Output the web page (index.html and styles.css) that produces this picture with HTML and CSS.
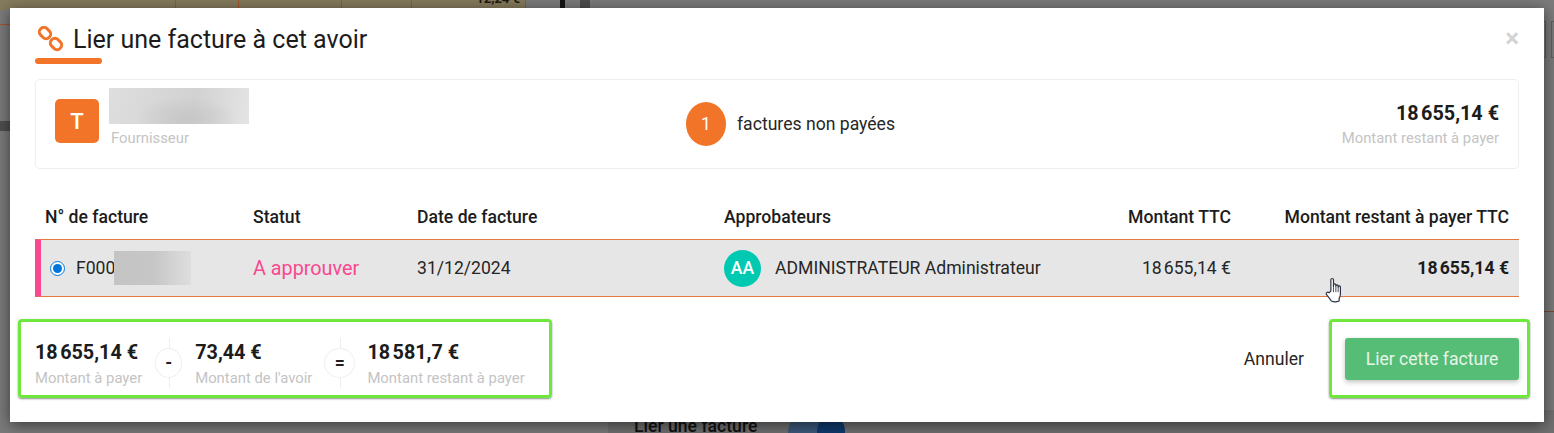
FILE: index.html
```html
<!DOCTYPE html>
<html lang="fr">
<head>
  <meta charset="UTF-8">
  <meta name="viewport" content="width=device-width, initial-scale=1.0">
  <title>Lier une facture à cet avoir</title>
  <link rel="stylesheet" href="styles.css">
</head>
<body>
  <!-- page behind the overlay -->
  <div class="behind" aria-hidden="true">
    <div class="behind-strip">
      <i class="tick tick-1"></i><i class="tick tick-2"></i><i class="tick tick-3"></i><i class="tick tick-4"></i><i class="tick tick-5"></i>
      <span class="behind-amount">12,24 €</span>
    </div>
    <i class="bar-black"></i>
    <i class="bar-grey"></i>
    <i class="left-line"></i>
    <i class="left-band"></i>
    <i class="right-line"></i>
    <i class="right-box right-box-1"></i>
    <i class="right-box right-box-2"></i>
    <div class="behind-pane">
      <span class="behind-title">Lier une facture</span>
      <span class="behind-toggle"><i></i></span>
    </div>
  </div>

  <div class="modal">
    <div class="modal-head">
      <svg class="link-icon" width="26" height="26" viewBox="0 0 26 26" fill="none" stroke="#f27428" stroke-width="3">
        <rect x="1" y="2.5" width="12" height="9" rx="4.2" transform="rotate(45 7 7)"/>
        <rect x="12" y="13.5" width="12" height="9" rx="4.2" transform="rotate(45 18 18)"/>
      </svg>
      <h1 class="modal-title">Lier une facture à cet avoir</h1>
      <span class="close">×</span>
      <i class="title-line"></i>
    </div>

    <div class="supplier-card">
      <div class="supplier">
        <span class="avatar">T</span>
        <div class="supplier-text">
          <div class="blur-name"></div>
          <div class="muted supplier-label">Fournisseur</div>
        </div>
      </div>
      <div class="unpaid">
        <span class="unpaid-count">1</span>
        <span>factures non payées</span>
      </div>
      <div class="remaining">
        <div class="amount">18&#8239;655,14 €</div>
        <div class="muted">Montant restant à payer</div>
      </div>
    </div>

    <div class="grid-row table-head">
      <div>N° de facture</div>
      <div>Statut</div>
      <div>Date de facture</div>
      <div>Approbateurs</div>
      <div class="right">Montant TTC</div>
      <div class="right">Montant restant à payer TTC</div>
    </div>
    <div class="grid-row table-row">
      <div class="invoice-no">
        <input type="radio" name="invoice" checked>
        <span>F000</span>
        <i class="blur-no"></i>
      </div>
      <div class="status">A approuver</div>
      <div>31/12/2024</div>
      <div class="approver">
        <span class="approver-badge">AA</span>
        <span>ADMINISTRATEUR Administrateur</span>
      </div>
      <div class="right">18&#8239;655,14 €</div>
      <div class="right strong">18&#8239;655,14 €</div>
      <svg class="hand" width="20" height="26" viewBox="0 0 18 24" stroke="#2b3344" stroke-width="1.1" fill="#fff">
        <path d="M5.2 13V2.6c0-1.6 2.4-1.6 2.4 0V9.5V7.4c0-1.4 2.2-1.4 2.2 0v2.4V8.2c0-1.3 2.1-1.3 2.1 0v2V9.2c0-1.3 2.1-1.3 2.1 0v6.4c0 2-.6 3-1.2 4.2v2.4c-2.4 1-5 1-7.2 0-1.2-2-2.6-3.6-4.2-5.6-1.3-1.7.6-3.4 2.2-2.1z"/>
        <path d="M7.6 9.5v4.5M9.8 9.8v4.2M11.9 10.2v3.8" fill="none" stroke-width=".8"/>
      </svg>
    </div>

    <div class="modal-foot">
      <div class="totals highlight">
        <div class="stat">
          <div class="amount">18&#8239;655,14 €</div>
          <div class="muted">Montant à payer</div>
        </div>
        <div class="op op-minus"><span>-</span></div>
        <div class="stat">
          <div class="amount">73,44 €</div>
          <div class="muted">Montant de l'avoir</div>
        </div>
        <div class="op op-equal"><span>=</span></div>
        <div class="stat">
          <div class="amount">18&#8239;581,7 €</div>
          <div class="muted">Montant restant à payer</div>
        </div>
      </div>
      <div class="actions">
        <a class="cancel">Annuler</a>
        <div class="highlight button-box">
          <button class="submit" type="button">Lier cette facture</button>
        </div>
      </div>
    </div>
  </div>
</body>
</html>
```

FILE: styles.css
```css
* {
  box-sizing: border-box;
}
html, body {
  margin: 0;
  padding: 0;
  height: 433px;
  overflow: hidden;
}
body {
  position: relative;
  background: #7b7b7b;
  font-family: Roboto, "Liberation Sans", sans-serif;
  font-size: 17.6px;
  color: #212121;
}
.muted {
  font-size: 14.85px;
  line-height: 18px;
  color: #c4c4c4;
}
.amount {
  font-size: 19.8px;
  line-height: 24px;
  font-weight: 700;
  color: #1c1c1c;
}
.right {
  text-align: right;
}

/* page behind the overlay */
.behind i {
  display: block;
  position: absolute;
}
.behind-strip {
  position: absolute;
  left: 0;
  top: 0;
  width: 526px;
  height: 10px;
  background: #857a5c;
  overflow: hidden;
}
.tick {
  top: 0;
  width: 1px;
  height: 10px;
  background: #a2552a;
}
.tick-1 { left: 175px; }
.tick-2 { left: 238px; }
.tick-3 { left: 341px; }
.tick-4 { left: 411px; }
.tick-5 { left: 525px; }
.behind-amount {
  position: absolute;
  right: 6px;
  top: -9px;
  font-size: 13px;
  font-weight: 700;
  color: #1c1a12;
}
.bar-black {
  left: 560px;
  top: 0;
  width: 5px;
  height: 10px;
  background: #141414;
}
.bar-grey {
  left: 580px;
  top: 0;
  width: 10px;
  height: 10px;
  background: #4c4c4c;
}
.left-line {
  left: 0;
  top: 24px;
  width: 12px;
  height: 1px;
  background: #a2552a;
}
.left-band {
  left: 0;
  top: 121px;
  width: 12px;
  height: 10px;
  background: #4f4f4f;
}
.right-line {
  left: 1540px;
  top: 311px;
  width: 14px;
  height: 1px;
  background: #7a4a2c;
}
.right-box {
  top: 21px;
  height: 37px;
  border: 1px solid #5f5f5f;
}
.right-box-1 { left: 1535px; width: 11px; }
.right-box-2 { left: 1551px; width: 6px; }
.behind-pane {
  position: absolute;
  left: 608px;
  top: 410px;
  width: 946px;
  height: 23px;
  background: #707070;
}
.behind-title {
  position: absolute;
  left: 26px;
  top: 6px;
  font-size: 17.6px;
  font-weight: 500;
  color: #111;
}
.behind-toggle {
  position: absolute;
  left: 180px;
  top: 6px;
  width: 57px;
  height: 30px;
  border-radius: 15px;
  background: #3e5a7c;
}
.behind-toggle i {
  right: 0;
  top: 0;
  width: 28px;
  height: 30px;
  border-radius: 50%;
  background: #0f3a6e;
}

/* modal */
.modal {
  position: relative;
  margin: 8px 0 0 10px;
  width: 1534px;
  height: 414px;
  padding: 0 25px;
  background: #fff;
  box-shadow: 0 3px 14px rgba(0, 0, 0, 0.55);
}
.modal-head {
  position: relative;
  height: 56px;
  display: flex;
  align-items: flex-start;
  margin-bottom: 15px;
  padding-top: 16px;
}
.link-icon {
  margin: 2px 9px 0 3px;
  flex-shrink: 0;
}
.modal-title {
  margin: 0;
  font-size: 25px;
  line-height: 32px;
  font-weight: 400;
  color: #1c1c1c;
}
.title-line {
  position: absolute;
  left: 0;
  bottom: 0;
  width: 67px;
  height: 6px;
  border-radius: 3px;
  background: #f27428;
}
.close {
  position: absolute;
  right: 0;
  top: 15px;
  font-size: 26px;
  line-height: 30px;
  font-weight: 700;
  color: #d3d3d3;
}

/* supplier card */
.supplier-card {
  position: relative;
  height: 90px;
  display: flex;
  align-items: center;
  justify-content: space-between;
  padding: 0 19px;
  border: 1px solid #eee;
  border-radius: 5px;
}
.supplier {
  display: flex;
  align-items: flex-start;
  align-self: flex-start;
  margin-top: 8px;
  width: 300px;
}
.avatar {
  width: 44px;
  height: 44px;
  display: flex;
  align-items: center;
  justify-content: center;
  margin: 11px 10px 0 0;
  border-radius: 5px;
  background: #f27428;
  color: #fff;
  font-size: 22px;
  font-weight: 500;
}
.blur-name {
  width: 140px;
  height: 36px;
  background:
    radial-gradient(ellipse 50px 22px at 78px 30px, #c6c6c6, rgba(198, 198, 198, 0)),
    linear-gradient(100deg, #dedede, #d2d2d2 60%, #e4e4e4);
}
.supplier-label {
  margin: 5px 0 0 2px;
}
.unpaid {
  position: absolute;
  left: 650px;
  top: 22px;
  display: flex;
  align-items: center;
  color: #262626;
}
.unpaid-count {
  width: 40px;
  height: 44px;
  display: flex;
  align-items: center;
  justify-content: center;
  margin-right: 11px;
  border-radius: 50%;
  background: #f27428;
  color: #fff;
}
.remaining {
  text-align: right;
  align-self: flex-start;
  margin-top: 22px;
}
.remaining .amount {
  margin-bottom: 3px;
}

/* table */
.grid-row {
  display: grid;
  grid-template-columns: 208px 164px 307px 340px 167px 278px;
  padding: 0 10px;
  align-items: center;
}
.table-head {
  height: 70px;
  padding-top: 26px;
  font-weight: 500;
  color: #1c1c1c;
}
.table-row {
  position: relative;
  height: 58px;
  border-top: 1px solid #e5793f;
  border-bottom: 1px solid #e5793f;
  border-left: 6px solid #f8488f;
  padding-left: 4px;
  background: #e6e6e6;
  color: #262626;
}
.invoice-no {
  position: relative;
  display: flex;
  align-items: center;
  padding-left: 5px;
}
.invoice-no input {
  width: 15px;
  height: 15px;
  margin: 0 11px 0 0;
  accent-color: #0075db;
}
.blur-no {
  position: absolute;
  left: 69px;
  top: calc(50% - 17px);
  width: 77px;
  height: 34px;
  background: linear-gradient(90deg, #c4c4c4, #c6c6c6 50%, #dedede);
}
.status {
  font-size: 19.8px;
  color: #f8488f;
}
.approver {
  display: flex;
  align-items: center;
  white-space: nowrap;
}
.approver-badge {
  width: 37px;
  height: 37px;
  display: flex;
  align-items: center;
  justify-content: center;
  margin-right: 14px;
  border-radius: 50%;
  background: #00c9b1;
  color: #fff;
  font-size: 17.6px;
  font-weight: 500;
}
.strong {
  font-weight: 700;
  color: #1c1c1c;
}
.hand {
  position: absolute;
  left: 1284px;
  top: 37px;
}

/* footer */
.modal-foot {
  display: flex;
  justify-content: space-between;
  margin: 22px -11px 0 -17px;
}
.highlight {
  height: 79px;
  border: 3px solid #6ee83c;
  border-radius: 4px;
  box-shadow: 0 1px 2px rgba(0, 0, 0, 0.45);
}
.totals {
  width: 534px;
  display: flex;
  gap: 13px;
  align-items: flex-start;
  padding: 19px 0 0 14px;
}
.stat {
  white-space: nowrap;
}
.stat .muted {
  margin-top: 4px;
}
.op {
  position: relative;
  height: 50px;
  margin-top: -3px;
  display: flex;
  align-items: center;
  justify-content: center;
  flex-shrink: 0;
}
.op::before {
  content: "";
  position: absolute;
  left: 50%;
  top: 0;
  bottom: 0;
  width: 1px;
  background: #eee;
}
.op span {
  position: relative;
  width: 100%;
  height: 30px;
  display: flex;
  align-items: center;
  justify-content: center;
  border: 1px solid #eee;
  border-radius: 50%;
  background: #fff;
  font-weight: 700;
}
.op-minus { width: 27px; }
.op-equal {
  width: 31px;
  margin-left: -1px;
  margin-right: -1px;
}
.actions {
  display: flex;
  align-items: center;
}
.cancel {
  margin-right: 25px;
  color: #262626;
}
.button-box {
  width: 201px;
  padding: 16px 8px 0 13px;
}
.submit {
  display: block;
  width: 174px;
  height: 42px;
  padding: 0;
  border: 0;
  border-radius: 3px;
  background: #56bd76;
  box-shadow: 0 2px 5px rgba(0, 0, 0, 0.25);
  color: #e6f5ea;
  font-family: inherit;
  font-size: 17.6px;
}
```
